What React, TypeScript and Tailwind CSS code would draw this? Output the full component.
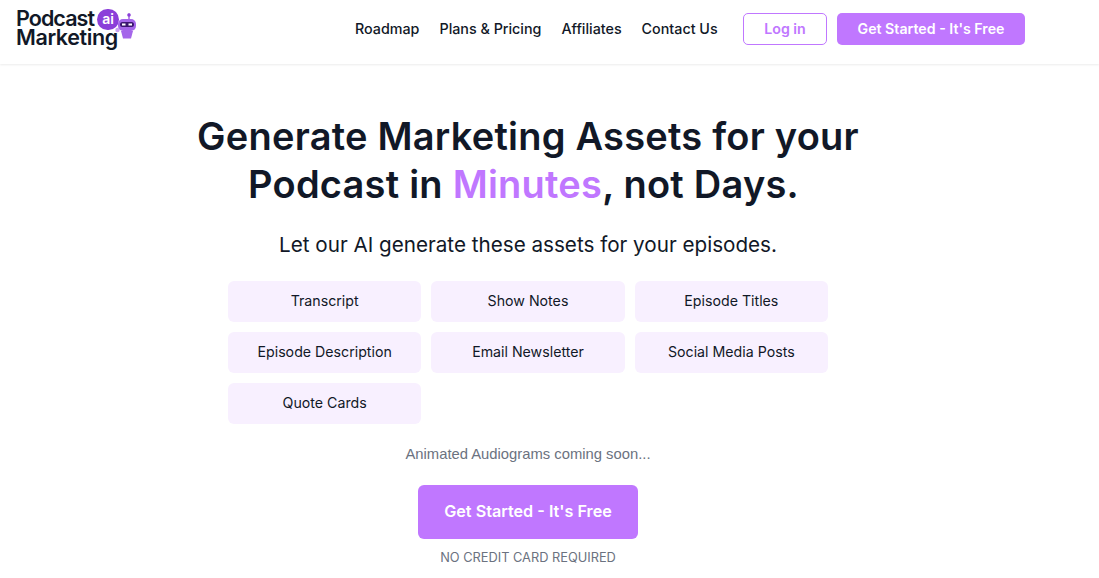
import * as React from 'react';

const assets = [
    'Transcript',
    'Show Notes',
    'Episode Titles',
    'Episode Description',
    'Email Newsletter',
    'Social Media Posts',
    'Quote Cards',
];

const Logo: React.FC = () => (
    <div className="relative -mt-[8px] h-[48px] w-[124px] text-[#111827]">
        <div className="pt-[5px] text-[21.500px] font-semibold">
            <div className="w-fit leading-[19px] tracking-[-0.95px]">Podcast</div>
            <div className="mt-[2px] w-fit leading-[15px] tracking-[-0.4px]">Marketing</div>
        </div>
        <div className="absolute top-[5px] left-[81px] flex h-[21px] w-[22px] items-center justify-center rounded-full bg-[#8b3fd9] pb-[2px] text-[14px] leading-none font-semibold text-white">
            ai
        </div>
        <svg className="absolute top-[9px] left-[99px]" width="22" height="27" viewBox="0 0 22 27">
            <path d="M14 0.500v6" stroke="#8b3fd9" strokeWidth="1.2" />
            <circle cx="14" cy="2" r="1.800" fill="#8b3fd9" />
            <rect x="3" y="6" width="18" height="12" rx="5" fill="#a566ea" />
            <rect x="5" y="9" width="14" height="5" rx="2.500" fill="#3b1670" />
            <rect x="7" y="10.500" width="3.500" height="2" fill="#fff" />
            <rect x="13.500" y="10.500" width="3.500" height="2" fill="#fff" />
            <path d="M6 18h12l-2 7.500h-8z" fill="#a566ea" />
            <circle cx="2.500" cy="17" r="2.200" fill="#c9a0f2" />
        </svg>
    </div>
);

export default function App() {
    return (
        <div className="h-[578px] w-full overflow-hidden bg-white font-['Inter',sans-serif] text-[#111827]">
            <header className="flex h-[64px] items-center pr-[74px] pl-[16px] shadow-[0_1px_2px_rgba(0,0,0,0.08)]">
                <Logo />
                <nav className="-mt-[6px] ml-[215px] flex items-center gap-[20px] text-[14.300px] font-medium">
                    <a>Roadmap</a>
                    <a>Plans &amp; Pricing</a>
                    <a>Affiliates</a>
                    <a>Contact Us</a>
                </nav>
                <div className="-mt-[6px] ml-auto flex items-center gap-[10px] text-[14.200px] font-semibold">
                    <button className="h-[32px] w-[84px] rounded-[5px] border border-[#c077ff] text-[#c077ff]">Log in</button>
                    <button className="h-[32px] w-[188px] rounded-[5px] bg-[#c077ff] text-white">Get Started - It's Free</button>
                </div>
            </header>
            <main className="flex w-[1056px] flex-col items-center">
                <h1 className="mt-[48px] text-center text-[38px] leading-[48px] font-semibold tracking-[0.23px]">
                    Generate Marketing Assets for your
                    <br />
                    <span className="pr-[9px]">
                        Podcast in <span className="text-[#c077ff]">Minutes</span>, not Days.
                    </span>
                </h1>
                <p className="mt-[24px] text-[20.650px] leading-[26px]">Let our AI generate these assets for your episodes.</p>
                <div className="mt-[23px] grid w-[600px] grid-cols-3 gap-[10px]">
                    {assets.map((name) => (
                        <div key={name} className="flex h-[41px] items-center justify-center rounded-[6px] bg-[#f8f0ff] pb-[1px] text-[14.200px]">
                            {name}
                        </div>
                    ))}
                </div>
                <p className="mt-[20px] font-['Liberation_Sans',sans-serif] text-[14.800px] leading-[20px] text-[#6b7280]">
                    Animated Audiograms coming soon...
                </p>
                <button className="mt-[21px] h-[54px] w-[220px] rounded-[6px] bg-[#c077ff] pb-[1px] text-[16.200px] font-semibold text-white">
                    Get Started - It's Free
                </button>
                <p className="mt-[10px] text-[12.800px] leading-[18px] text-[#6b7280]">NO CREDIT CARD REQUIRED</p>
            </main>
        </div>
    );
}
